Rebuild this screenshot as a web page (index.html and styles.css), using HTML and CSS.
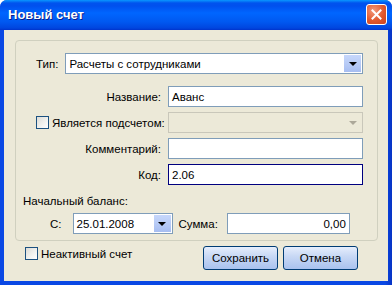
FILE: index.html
```html
<!DOCTYPE html>
<html lang="ru">
<head>
<meta charset="utf-8">
<link rel="stylesheet" href="styles.css">
</head>
<body>
<div class="window">
  <div class="titlebar">
    <span class="title">Новый счет</span>
    <span class="close"><svg width="11" height="11" viewBox="0 0 11 11"><path d="M1.5 1.5 L9.5 9.5 M9.5 1.5 L1.5 9.5" stroke="#fff" stroke-width="2" stroke-linecap="square"/></svg></span>
  </div>
  <div class="client">
    <div class="group">
      <div class="row-type">
        <span class="lbl">Тип:</span>
        <div class="combo wide"><span class="val">Расчеты с сотрудниками</span><span class="drop"><i class="tri"></i></span></div>
      </div>
      <div class="row first">
        <span class="lbl r">Название:</span>
        <div class="input"><span class="val">Аванс</span></div>
      </div>
      <div class="row">
        <span class="lbl r chk-lbl"><span class="cb"></span>Является подсчетом:</span>
        <div class="combo disabled"><span class="val"></span><span class="drop"><i class="tri"></i></span></div>
      </div>
      <div class="row">
        <span class="lbl r">Комментарий:</span>
        <div class="input"><span class="val"></span></div>
      </div>
      <div class="row">
        <span class="lbl r">Код:</span>
        <div class="input focus"><span class="val">2.06</span></div>
      </div>
      <div class="balance">Начальный баланс:</div>
      <div class="row-bal">
        <span class="lbl">С:</span>
        <div class="combo date"><span class="val">25.01.2008</span><span class="drop"><i class="tri"></i></span></div>
        <span class="lbl sum">Сумма:</span>
        <div class="input sumin"><span class="val num">0,00</span></div>
      </div>
    </div>
    <div class="footer">
      <label class="inactive"><span class="cb"></span>Неактивный счет</label>
      <div class="buttons">
        <span class="btn">Сохранить</span>
        <span class="btn">Отмена</span>
      </div>
    </div>
  </div>
</div>
</body>
</html>
```
FILE: styles.css
```css
* { box-sizing: border-box; }
html, body { margin: 0; padding: 0; }
body {
  width: 392px;
  height: 285px;
  overflow: hidden;
  font-family: "Liberation Sans", Arial, sans-serif;
  font-size: 11.5px;
  color: #000;
  background: #fff;
}
.window {
  width: 392px;
  height: 285px;
  display: flex;
  flex-direction: column;
  background: linear-gradient(to right, #0a48e4 0, #0a48e4 385px, #0733c4 392px);
  border-radius: 7px 7px 0 0;
  overflow: hidden;
}
.titlebar {
  height: 30px;
  flex: none;
  display: flex;
  align-items: center;
  justify-content: space-between;
  padding: 0 5px 1px 8px;
  background: linear-gradient(to bottom, #0997ff 0px, #0053ee 3px, #0050ee 6px, #0066ff 13px, #0058f0 22px, #0046df 28px, #0033cc 30px);
}
.title {
  color: #fff;
  font-family: "Liberation Sans", Arial, sans-serif;
  font-weight: bold;
  font-size: 13px;
  text-shadow: 1px 1px 0 #0a1e8a;
}
.close {
  width: 21px;
  height: 21px;
  border: 1px solid #fff;
  border-radius: 3px;
  background: radial-gradient(circle at 35% 30%, #f29a7c 0%, #e1582d 55%, #c9431c 100%);
  display: flex;
  align-items: center;
  justify-content: center;
}
.client {
  flex: 1;
  margin: 0 4px 4px 4px;
  background: #ece9d8;
  padding: 10px 10px 0 11px;
  display: flex;
  flex-direction: column;
}
.group {
  border: 1px solid #d0d0bf;
  border-radius: 4px;
  padding: 12px 14px 6px 19px;
  display: flex;
  flex-direction: column;
}
.lbl { white-space: nowrap; }
.row-type {
  display: flex;
  align-items: center;
  gap: 7px;
  padding-left: 1px;
}
.row {
  display: flex;
  align-items: center;
  margin-top: 5px;
}
.row.first { margin-top: 12px; }
.row .lbl.r {
  width: 126px;
  text-align: right;
  margin-right: 7px;
}
.chk-lbl {
  display: flex;
  align-items: center;
  justify-content: flex-start;
  gap: 3px;
  padding-left: 1px;
}
.cb {
  width: 13px;
  height: 13px;
  border: 1px solid #1c5180;
  background: linear-gradient(135deg, #dcdcd7 0%, #f3f3f0 60%, #fff 100%);
  display: inline-block;
  flex: none;
}
.combo, .input {
  height: 21px;
  border: 1px solid #7f9db9;
  background: #fff;
  display: flex;
  align-items: center;
  flex: none;
}
.combo { width: 195px; padding: 1px; }
.combo.wide { width: 298px; }
.input { width: 195px; }
.input.focus { border-color: #00007f; }
.val { flex: 1; padding-left: 2px; white-space: nowrap; overflow: hidden; }
.input .val { padding-left: 3px; }
.drop {
  width: 17px;
  align-self: stretch;
  background: linear-gradient(to bottom, #c6d7fb, #b5c9f5 60%, #a6bdf1);
  display: flex;
  align-items: center;
  justify-content: center;
}
.tri {
  width: 0;
  height: 0;
  border-left: 4px solid transparent;
  border-right: 4px solid transparent;
  border-top: 4px solid #000;
}
.combo.disabled { border-color: #c9c7ba; background: #ece9d8; }
.combo.disabled .drop { background: none; }
.combo.disabled .tri { border-top-color: #aca899; }
.balance {
  margin-top: 10px;
  margin-left: -12px;
}
.row-bal {
  display: flex;
  align-items: center;
  margin-top: 6px;
  margin-left: 15px;
}
.combo.date { width: 100px; margin-left: 11px; }
.sum { margin-left: 6px; }
.sumin { width: 123px; margin-left: 9px; }
.num { text-align: right; padding-right: 3px; }
.footer {
  display: flex;
  justify-content: space-between;
  align-items: flex-start;
  margin-top: 5px;
}
.inactive {
  display: flex;
  align-items: center;
  gap: 3px;
  margin-left: 10px;
  margin-top: 1px;
}
.buttons {
  display: flex;
  gap: 5px;
  margin-right: 20px;
}
.btn {
  width: 75px;
  height: 24px;
  border: 1px solid #003c74;
  border-radius: 3px;
  background: linear-gradient(to bottom, #e6eefc 0%, #c9d9f5 40%, #a9c2ee 100%);
  display: flex;
  align-items: center;
  justify-content: center;
}
```
